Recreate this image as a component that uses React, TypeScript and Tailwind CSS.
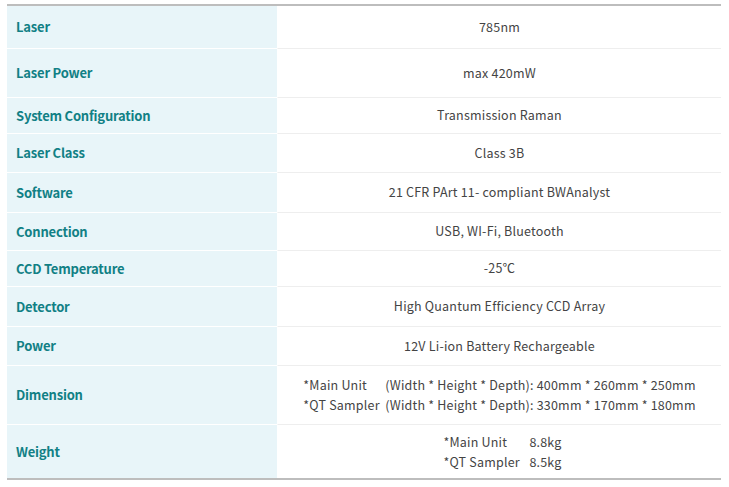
import React from "react";

type Row = { label: string; h: string; value: React.ReactNode; last?: boolean };

const rows: Row[] = [
  { label: "Laser", h: "h-[43px]", value: "785nm" },
  { label: "Laser Power", h: "h-[49px]", value: "max 420mW" },
  { label: "System Configuration", h: "h-[36px]", value: "Transmission Raman" },
  { label: "Laser Class", h: "h-[39px]", value: "Class 3B" },
  { label: "Software", h: "h-[40px]", value: "21 CFR PArt 11- compliant BWAnalyst" },
  { label: "Connection", h: "h-[38px]", value: "USB, WI-Fi, Bluetooth" },
  { label: "CCD Temperature", h: "h-[36px]", value: "-25℃" },
  { label: "Detector", h: "h-[40px]", value: "High Quantum Efficiency CCD Array" },
  { label: "Power", h: "h-[39px]", value: "12V Li-ion Battery Rechargeable" },
  {
    label: "Dimension",
    h: "h-[59px]",
    value: (
      <div className="grid grid-cols-[82px_auto] leading-[20px] whitespace-pre text-left">
        <div>*Main Unit</div>
        <div>{"(Width * Height * Depth): 400mm * 260mm * 250mm"}</div>
        <div>*QT Sampler</div>
        <div>{"(Width * Height * Depth): 330mm * 170mm * 180mm"}</div>
      </div>
    ),
  },
  {
    label: "Weight",
    h: "h-[53px]",
    last: true,
    value: (
      <div className="grid grid-cols-[86px_auto] leading-[20px] text-left pl-[6px]">
        <div>*Main Unit</div>
        <div>8.8kg</div>
        <div>*QT Sampler</div>
        <div>8.5kg</div>
      </div>
    ),
  },
];

export default function App() {
  return (
    <div className="w-[729px] h-[487px] bg-white pt-[4px] pl-[7px]">
      <div className="w-[714px] border-t-2 border-b-2 border-[#bdbdbd]">
        {rows.map((r, i) => (
          <div key={i} className={`flex ${r.h}`}>
            <div
              className={`w-[270px] shrink-0 bg-[#e8f5f9] flex items-center pl-[9px] text-[13px] font-bold text-[#118085] tracking-[-0.2px] ${
                r.last ? "" : "border-b border-white"
              }`}
              style={{ fontFamily: '"Noto Sans CJK KR", "Noto Sans", sans-serif' }}
            >
              {r.label}
            </div>
            <div
              className={`flex-1 border-l border-white flex items-center justify-center text-[12.5px] tracking-[0.2px] text-[#444] ${
                r.last ? "" : "border-b border-b-[#eeeeee]"
              }`}
              style={{ fontFamily: '"Noto Sans CJK KR", "Noto Sans", sans-serif' }}
            >
              {r.value}
            </div>
          </div>
        ))}
      </div>
    </div>
  );
}
